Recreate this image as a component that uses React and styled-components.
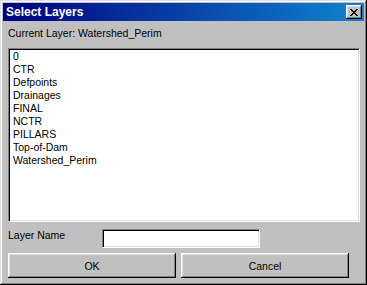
import React, { useState } from "react";
import styled, { createGlobalStyle, css } from "styled-components";

const GlobalStyle = createGlobalStyle`
body{
  margin:0;
  background:#c0c0c0;
  font-family:"Liberation Sans", Arial, sans-serif;
  font-size:10.5px;
  color:#000;
}
`;

const sunken = css`
  box-sizing: border-box;
  background: #fff;
  border-style: solid;
  border-width: 1px;
  border-color: #808080 #fff #fff #808080;
  box-shadow: inset 1px 1px #000, inset -1px -1px #dfdfdf;
`;

const Window = styled.div`
  box-sizing: border-box;
  width: 367px;
  height: 285px;
  padding: 3px;
  background: #c0c0c0;
  display: flex;
  flex-direction: column;
  box-shadow: inset -1px -1px #000, inset 1px 1px #dfdfdf,
    inset -2px -2px #808080, inset 2px 2px #fff;
`;

const TitleBar = styled.div`
  height: 18px;
  display: flex;
  align-items: center;
  justify-content: space-between;
  padding: 0 2px 0 3px;
  background: linear-gradient(to right, #000080, #1084d0);
  color: #fff;
  font-weight: 700;
  font-size: 12px;
`;

const CloseButton = styled.button`
  box-sizing: border-box;
  width: 16px;
  height: 14px;
  padding: 0;
  border: none;
  background: #c0c0c0;
  display: flex;
  align-items: center;
  justify-content: center;
  box-shadow: inset -1px -1px #000, inset 1px 1px #fff,
    inset -2px -2px #808080, inset 2px 2px #dfdfdf;
`;

const Body = styled.div`
  flex: 1;
  display: flex;
  flex-direction: column;
  padding: 6px 4px 0 5px;
`;

const Caption = styled.div`
  line-height: 13px;
  margin-bottom: 8px;
`;

const List = styled.ul`
  ${sunken};
  height: 174px;
  margin: 0;
  padding: 1px 2px;
  list-style: none;
`;

const Item = styled.li`
  line-height: 13px;
  padding-left: 2px;
  white-space: nowrap;
`;

const FieldRow = styled.div`
  display: flex;
  align-items: flex-start;
  margin-top: 7px;
`;

const FieldLabel = styled.label`
  width: 94px;
  line-height: 13px;
`;

const TextInput = styled.input`
  ${sunken};
  width: 158px;
  height: 19px;
  margin: 0;
  padding: 0 3px;
  font: inherit;
  outline: none;
`;

const ButtonRow = styled.div`
  display: flex;
  gap: 5px;
  margin-top: 5px;
`;

const Button = styled.button`
  box-sizing: border-box;
  width: 168px;
  height: 25px;
  border: none;
  padding: 0;
  background: #c0c0c0;
  font: inherit;
  color: #000;
  box-shadow: inset -1px -1px #000, inset 1px 1px #fff,
    inset -2px -2px #808080, inset 2px 2px #dfdfdf;
`;

const layers = [
  "0",
  "CTR",
  "Defpoints",
  "Drainages",
  "FINAL",
  "NCTR",
  "PILLARS",
  "Top-of-Dam",
  "Watershed_Perim",
];

function App() {
  const [name, setName] = useState("");

  return (
    <>
      <GlobalStyle />
      <Window>
        <TitleBar>
          <span>Select Layers</span>
          <CloseButton aria-label="Close">
            <svg width="8" height="7" viewBox="0 0 8 7" shapeRendering="crispEdges">
              <path
                fill="#000"
                d="M0 0h2v1h1v1h2V1h1V0h2v1H7v1H6v1H5v1h1v1h1v1h1v1H6V6H5V5H3v1H2v1H0V6h1V5h1V4h1V3H2V2H1V1H0z"
              />
            </svg>
          </CloseButton>
        </TitleBar>
        <Body>
          <Caption>Current Layer: Watershed_Perim</Caption>
          <List>
            {layers.map((l) => (
              <Item key={l}>{l}</Item>
            ))}
          </List>
          <FieldRow>
            <FieldLabel htmlFor="layername">Layer Name</FieldLabel>
            <TextInput
              id="layername"
              value={name}
              onChange={(e) => setName(e.currentTarget.value)}
            />
          </FieldRow>
          <ButtonRow>
            <Button>OK</Button>
            <Button>Cancel</Button>
          </ButtonRow>
        </Body>
      </Window>
    </>
  );
}

export default App;
